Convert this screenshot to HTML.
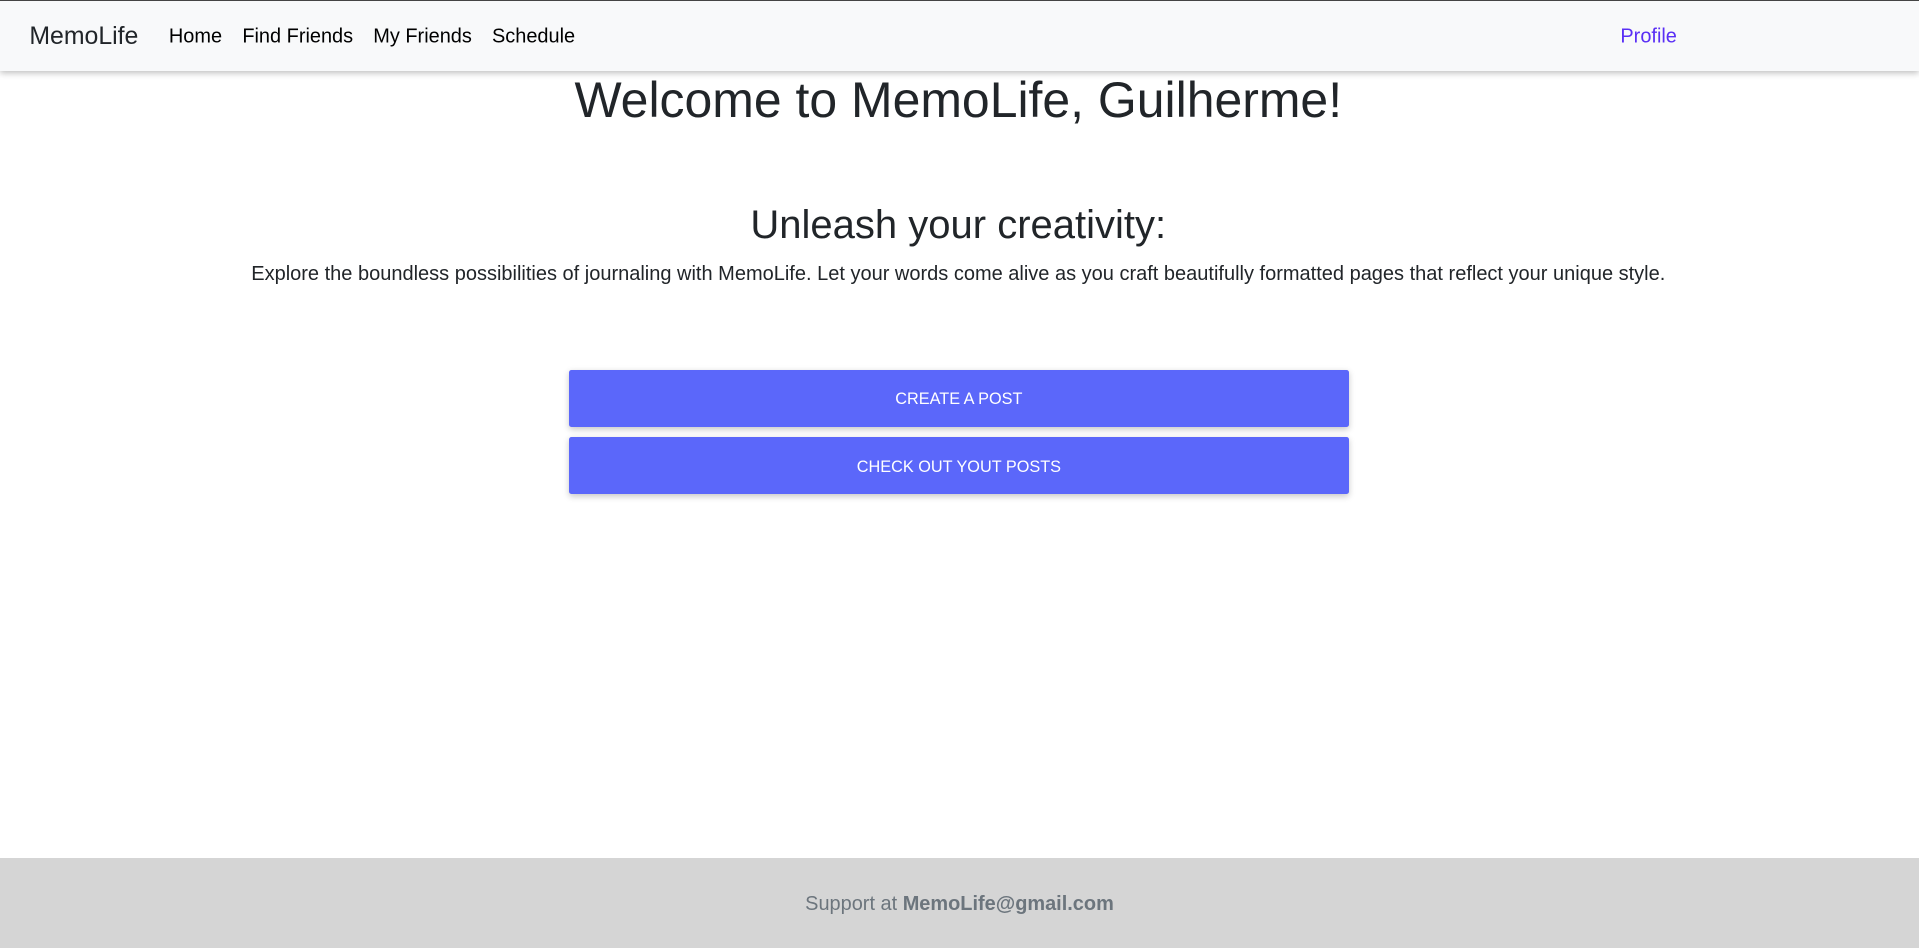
<!DOCTYPE html>
<html><head><meta charset="utf-8"><style>
html,body{margin:0;padding:0}
body{width:1568px;height:775px;zoom:1.22385;font-family:"Liberation Sans",Arial,sans-serif;color:#212529;background:#fff;position:relative;overflow:hidden}
.nav{position:absolute;left:0;top:0;width:1568px;height:57px;background:#f8f9fa;border-top:1px solid #444;box-shadow:0 2px 5px rgba(0,0,0,.25);z-index:2}
.nav span{position:absolute;top:29.4px;transform:translateY(-50%);white-space:nowrap}
.brand{left:24px;font-size:20.3px}
.l{font-size:16.3px;color:#000}
h1{position:absolute;left:0;width:1566px;top:58px;margin:0;text-align:center;font-weight:400;font-size:40.8px;line-height:48px}
h2{position:absolute;left:0;width:1566px;top:164px;margin:0;text-align:center;font-weight:400;font-size:32.7px;line-height:40px}
p{position:absolute;left:0;width:1566px;top:213.6px;margin:0;text-align:center;font-size:16.35px;line-height:22px}
.btn{position:absolute;left:465px;width:637px;height:47px;background:#5b67fa;color:#fff;font-size:13.3px;text-align:center;line-height:49px;border-radius:2px;box-shadow:0 2px 5px rgba(0,0,0,.22)}
.foot{position:absolute;left:0;top:701px;width:1568px;height:74px;background:#d5d5d5;text-align:center;line-height:76px;font-size:16.3px;color:#6c757d}
</style></head><body>
<div class="nav">
<span class="brand">MemoLife</span>
<span class="l" style="left:138px">Home</span>
<span class="l" style="left:198px">Find Friends</span>
<span class="l" style="left:305px">My Friends</span>
<span class="l" style="left:402px">Schedule</span>
<span class="l" style="left:1324px;color:#5a2ff5">Profile</span>
</div>
<h1>Welcome to MemoLife, Guilherme!</h1>
<h2>Unleash your creativity:</h2>
<p>Explore the boundless possibilities of journaling with MemoLife. Let your words come alive as you craft beautifully formatted pages that reflect your unique style.</p>
<div class="btn" style="top:302px">CREATE A POST</div>
<div class="btn" style="top:357px;line-height:50px">CHECK OUT YOUT POSTS</div>
<div class="foot">Support at <b>MemoLife@gmail.com</b></div>
</body></html>
